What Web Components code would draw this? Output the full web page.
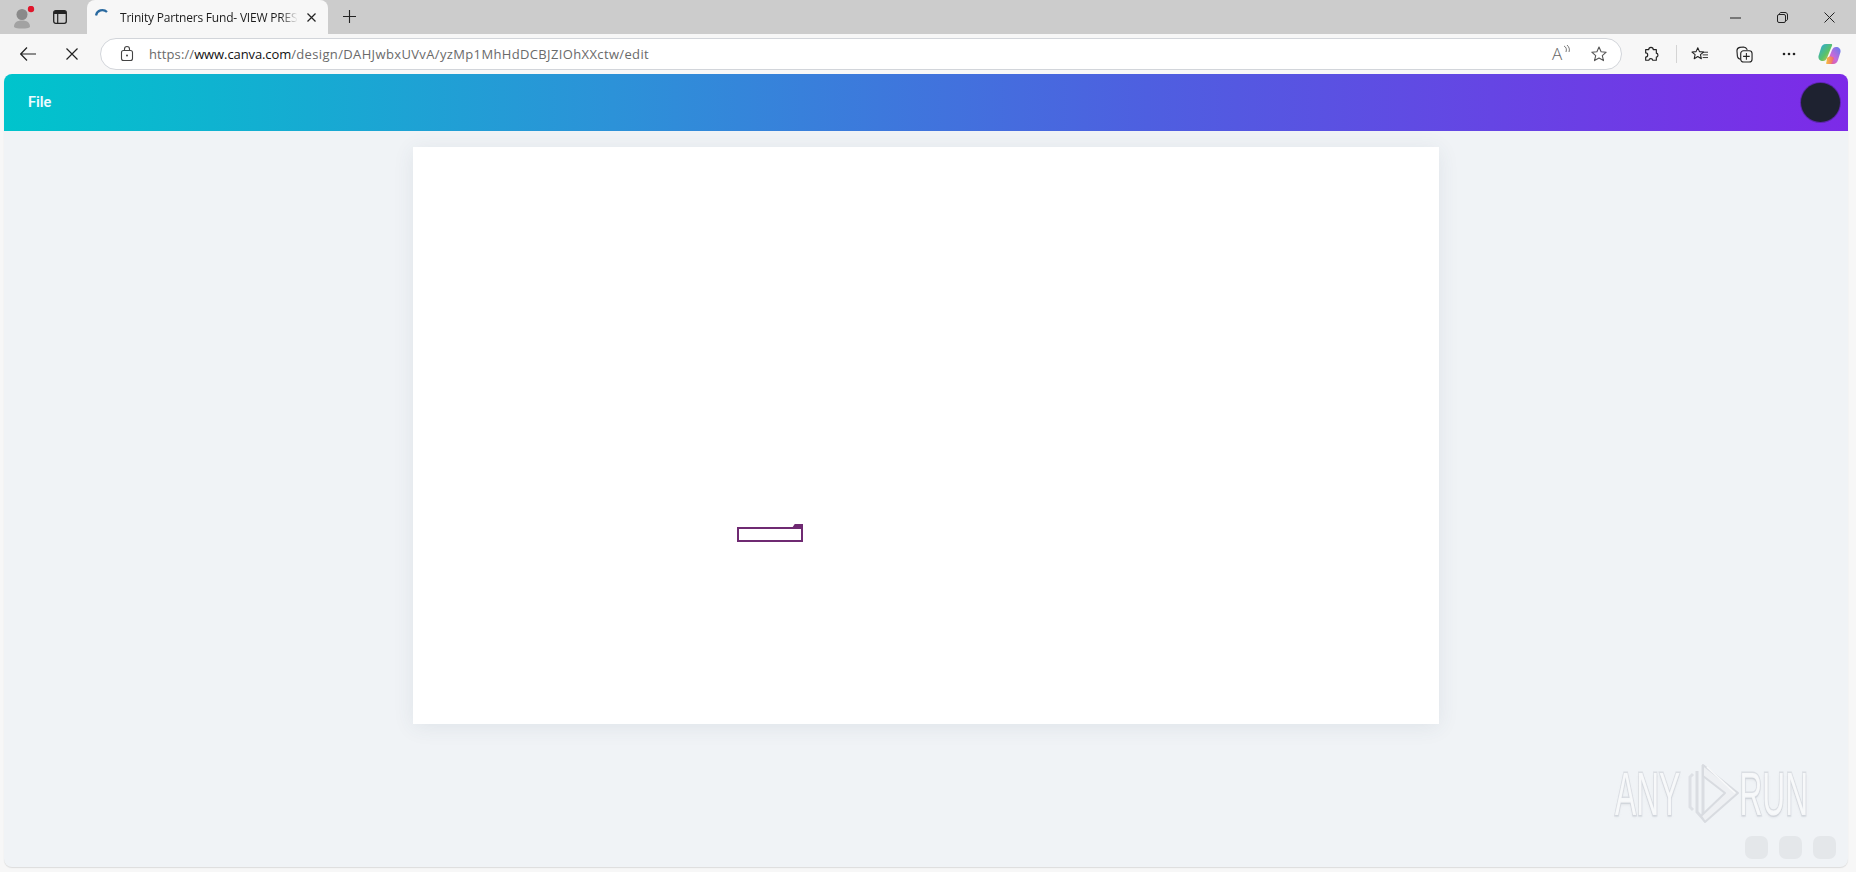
<!DOCTYPE html>
<html><head><meta charset="utf-8"><style>
html,body{margin:0;height:100%;overflow:hidden;background:#f7f7f7}
body{display:flex;flex-direction:column;width:1856px;height:872px;font-family:"Open Sans","Noto Sans",sans-serif}
</style></head><body>
<browser-tabstrip></browser-tabstrip>
<browser-toolbar url-host="www.canva.com" url-path="/design/DAHJwbxUVvA/yzMp1MhHdDCBJZIOhXXctw/edit"></browser-toolbar>
<canva-app></canva-app>
<script>
function def(name,html){customElements.define(name,class extends HTMLElement{constructor(){super();this.attachShadow({mode:'open'}).innerHTML=typeof html==='function'?html(this):html}})}
def('browser-tabstrip',`<style>
:host{display:flex;height:34px;background:#cccccc;align-items:stretch;flex:none;position:relative}
.p{width:87px;display:flex;align-items:center;flex:none;position:relative}
.tab{width:241px;height:34px;background:#f7f7f7;border-radius:8px 8px 0 0;display:flex;align-items:center;flex:none;box-sizing:border-box;padding-left:33px;position:relative;font:12px "Open Sans",sans-serif;color:#1c1c1c}
.t{white-space:nowrap;-webkit-mask-image:linear-gradient(90deg,#000 160px,transparent 178px);letter-spacing:-.2px}
svg{display:block;flex:none}
.sp{flex:1}.w{display:flex;align-items:center;gap:36px;padding-right:21px}
</style>
<div class="p">
<svg style="margin-left:12px;margin-top:2px" width="24" height="24" viewBox="0 0 24 24"><circle cx="10" cy="8.500" r="5.500" fill="#8a8a8a"/><path d="M2 21c0-4.500 3-6.500 8-6.500s8 2 8 6.500c-2 2-14 2-16 0z" fill="#a2a2a2"/><circle cx="19" cy="3" r="3.200" fill="#e0162b"/></svg>
<svg style="margin-left:17px" width="14" height="14" viewBox="0 0 14 14"><rect x=".7" y=".7" width="12.600" height="12.600" rx="2" fill="none" stroke="#222" stroke-width="1.300"/><path d="M1 4h12V1.500L12.500 1h-11L1 1.500z" fill="#222"/><path d="M4.700 4v9.300" stroke="#222" stroke-width="1.200"/></svg>
</div>
<div class="tab">
<svg style="position:absolute;left:8px;top:8px" width="13" height="9" viewBox="0 0 13 9"><path d="M1 7.500A6.500 6.500 0 0 1 12 4" fill="none" stroke="#2a6aa0" stroke-width="2.200"/></svg>
<span class="t">Trinity Partners Fund- VIEW PRESE</span>
<svg style="position:absolute;left:220px;top:13px" width="9" height="9" viewBox="0 0 9 9"><path d="M.5.500l8 8M8.500.500l-8 8" stroke="#222" stroke-width="1.200"/></svg>
</div>
<svg style="margin-left:15px;margin-top:10px" width="13" height="13" viewBox="0 0 13 13"><path d="M6.500 0v13M0 6.500h13" stroke="#222" stroke-width="1.100"/></svg>
<div class="sp"></div>
<div class="w">
<svg width="11" height="11" viewBox="0 0 11 11"><path d="M0 6h11" stroke="#222" stroke-width="1"/></svg>
<svg width="11" height="11" viewBox="0 0 11 11"><rect x=".5" y="2.500" width="8" height="8" rx="1.500" fill="none" stroke="#222"/><path d="M2.500 2.500V2c0-1 .7-1.500 1.500-1.500h4c1.500 0 2.500 1 2.500 2.500v4c0 1-.5 1.500-1.500 1.500" fill="none" stroke="#222"/></svg>
<svg width="11" height="11" viewBox="0 0 11 11"><path d="M.5.500l10 10M10.500.500l-10 10" stroke="#222" stroke-width="1"/></svg>
</div>`);
def('address-box',el=>`<style>
:host{display:flex;align-items:center;box-sizing:border-box;height:32px;width:1522px;margin-left:22px;border:1px solid #d2d5da;border-radius:16px;background:#fff;position:relative;font:13px "Open Sans",sans-serif;letter-spacing:.1px;color:#6a6a6a}
.u{margin-left:48px;white-space:nowrap}b{font-weight:400;color:#111;letter-spacing:-.1px}i{font-style:normal;letter-spacing:.36px}
svg{position:absolute;display:block}
</style>
<svg style="left:19px;top:6px" width="14" height="18" viewBox="0 0 14 18"><rect x="1.500" y="5.500" width="11" height="10" rx="2" fill="none" stroke="#444" stroke-width="1.100"/><path d="M4.500 5.500V4a2.500 2.500 0 0 1 5 0v1.500" fill="none" stroke="#444" stroke-width="1.100"/><circle cx="7" cy="10.500" r="1" fill="#444"/></svg>
<span class="u">https://<b>${el.getAttribute('host')}</b><i>${el.getAttribute('path')}</i></span>
<span style="position:absolute;left:1451px;top:4px;font:300 17px/22px 'Open Sans',sans-serif;letter-spacing:0;color:#666">A<svg style="left:11px;top:2px" width="8" height="9" viewBox="0 0 8 9"><path d="M1 1c2 1 3 3 2 6M4 0c2 2 3 4 2 7" fill="none" stroke="#666" stroke-width=".9"/></svg></span>
<svg style="left:1489px;top:6px" width="18" height="18" viewBox="0 0 18 18"><path d="M9 2l2.100 4.700 5.100.5-3.900 3.400 1.200 5L9 13l-4.500 2.600 1.200-5L1.800 7.200l5.100-.5z" fill="none" stroke="#555" stroke-width="1.100" stroke-linejoin="round"/></svg>`);
customElements.define('browser-toolbar',class extends HTMLElement{constructor(){super();const h=this.getAttribute('url-host'),p=this.getAttribute('url-path');
this.attachShadow({mode:'open'}).innerHTML=`<style>
:host{display:flex;align-items:center;height:40px;background:#f7f7f7;flex:none;position:relative}
svg{display:block;flex:none}
.r{position:absolute;top:0;height:40px;display:flex;align-items:center}
</style>
<svg style="margin-left:20px" width="16" height="14" viewBox="0 0 16 14"><path d="M.5 7h15.500M7 .5L.7 7 7 13.500" fill="none" stroke="#222" stroke-width="1.200"/></svg>
<svg style="margin-left:30px" width="12" height="12" viewBox="0 0 12 12"><path d="M.5.500l11 11M11.500.500l-11 11" stroke="#222" stroke-width="1.200"/></svg>
<address-box host="${h}" path="${p}"></address-box>
<div class="r" style="left:1643px"><svg width="16" height="17" viewBox="0 0 18 18"><path d="M6.500 3.500a2.500 2.500 0 0 1 5 0h3.500v4a2.300 2.300 0 0 1 0 4.500V15.500h-4a2.300 2.300 0 0 0-4.500 0H3v-3.700a2.300 2.300 0 0 0 0-4.600V3.500z" fill="none" stroke="#222" stroke-width="1.300" stroke-linejoin="round"/></svg></div>
<div class="r" style="left:1676px"><div style="width:1px;height:18px;background:#d4d4d4"></div></div>
<div class="r" style="left:1691px"><svg width="18" height="16" viewBox="0 0 20 18"><path d="M7.500 2l1.900 4.300 4.600.5-3.500 3 1 4.500-4-2.400-4 2.400 1-4.500-3.500-3 4.600-.5z" fill="none" stroke="#222" stroke-width="1.200" stroke-linejoin="round"/><path d="M13 7h6M13 10h6M13 13h6" stroke="#222"/></svg></div>
<div class="r" style="left:1736px"><svg width="17" height="17" viewBox="0 0 18 18"><path d="M5 14c-2 0-3-1-3.500-3L1 5c0-2 1-3 3-3.500L8 1c2 0 3 1 4 3" fill="none" stroke="#222" stroke-width="1.200"/><rect x="5" y="5" width="12" height="12" rx="3" fill="#f7f7f7" stroke="#222" stroke-width="1.200"/><path d="M11 7.500v7M7.500 11h7" stroke="#222" stroke-width="1.100"/></svg></div>
<div class="r" style="left:1782px"><svg width="14" height="4" viewBox="0 0 14 4"><circle cx="2" cy="2" r="1.300" fill="#222"/><circle cx="7" cy="2" r="1.300" fill="#222"/><circle cx="12" cy="2" r="1.300" fill="#222"/></svg></div>
<div class="r" style="left:1818px"><svg width="23" height="22" viewBox="0 0 23 22"><defs><linearGradient id="a" x1="0" y1="0" x2="1" y2="1"><stop offset="0" stop-color="#2aa7e8"/><stop offset=".55" stop-color="#58c26a"/><stop offset="1" stop-color="#f6c23c"/></linearGradient><linearGradient id="b" x1="1" y1="0" x2="0" y2="1"><stop offset="0" stop-color="#5f7cf0"/><stop offset=".55" stop-color="#c86ad8"/><stop offset="1" stop-color="#f0567a"/></linearGradient><linearGradient id="c" x1="0" y1="0" x2="1" y2="0"><stop offset="0" stop-color="#f6c23c"/><stop offset="1" stop-color="#f0607a"/></linearGradient></defs><path d="M8 1h5c2 0 1 2 0 4L9 15c-1 2-2 3-4 3-3 0-5-2-4.500-5L3 5c.5-2 2-4 5-4z" fill="url(#a)"/><path d="M15 21h-5c-2 0-1-2 0-4l4-10c1-2 2-3 4-3 3 0 5 2 4.500 5L20 17c-.5 2-2 4-5 4z" fill="url(#b)"/><path d="M9 15c2-2 5-2 7 0l-2 5c-.5 1-2 1-3 1H9c-1 0-1-1-.5-2z" fill="url(#c)"/></svg></div>`}});
def('canva-header',`<style>
:host{display:flex;align-items:center;justify-content:space-between;height:57px;flex:none;box-sizing:border-box;padding:0 8px 0 24px;border-radius:8px 8px 0 0;background:linear-gradient(90deg,#00c4cc 0%,#2c92d8 33%,#4e5fe0 62%,#7d2ae8 100%);color:#fff}
.f{font:600 14.500px Roboto,"Open Sans",sans-serif;color:#eefbff}
.a{width:39px;height:39px;border-radius:50%;background:#1e2230;box-shadow:0 0 0 1px rgba(60,30,110,.5)}
</style><span class="f">File</span><div class="a"></div>`);
def('design-page',`<style>
:host{display:block;width:1026px;height:577px;background:#fff;box-shadow:0 3px 20px rgba(57,76,96,.09);position:relative;flex:none}
.mark{position:absolute;left:324px;top:380px;width:66px;height:15px;box-sizing:border-box;border:2px solid #6f2a72;background:#fff}
.mark i{position:absolute;right:-2px;top:-5px;width:11px;height:4px;background:#6f2a72;clip-path:polygon(25% 0,100% 0,100% 100%,0 100%)}
</style><div class="mark"><i></i></div>`);
def('anyrun-mark',`<style>
:host{position:absolute;right:40px;top:686px;width:193px;height:68px;filter:blur(.5px)}
span{position:absolute;top:0;font:61px/68px "Liberation Sans",sans-serif;color:rgba(250,251,252,.9);-webkit-text-stroke:3px rgba(216,220,225,.9);paint-order:stroke fill;text-shadow:0 2px 3px rgba(190,195,203,.4);transform:scaleX(.52);white-space:nowrap}
.l{left:0;transform-origin:left}.r{right:0;transform-origin:right}
svg{display:block;position:absolute;left:70px;top:2px}
</style><span class="l">ANY</span><svg width="56" height="64" viewBox="0 0 56 64"><path d="M8 12L5 15v30l3 3" fill="none" stroke="#dde0e5" stroke-width="3"/><path d="M12 9v41l8 9M18 3v50" fill="none" stroke="#dadde2" stroke-width="3"/><path d="M18 3l35 28-33 29-4-6L40 31 18 14z" fill="#eef0f3" stroke="#d8dbe0" stroke-width="2" stroke-linejoin="round"/><path d="M22 5l28 26" stroke="#f8f9fa" stroke-width="1.500" fill="none"/></svg><span class="r">RUN</span>`);
def('corner-dots',`<style>
:host{position:absolute;right:12px;top:762px;display:flex;gap:11px}
i{display:block;width:23px;height:23px;border-radius:7px;background:#e4e7ea}
</style><i></i><i></i><i></i>`);
def('canva-app',`<style>
:host{display:flex;flex-direction:column;flex:1;margin:0 8px 5px 4px;background:#f0f3f6;border-radius:8px;position:relative;box-shadow:0 1px 1px #dcdcdc}
.c{flex:1;display:flex;justify-content:center;align-items:flex-start;padding:16px 0 0 0}
</style><canva-header></canva-header><div class="c"><design-page></design-page></div><anyrun-mark></anyrun-mark><corner-dots></corner-dots>`);
</script>
</body></html>
